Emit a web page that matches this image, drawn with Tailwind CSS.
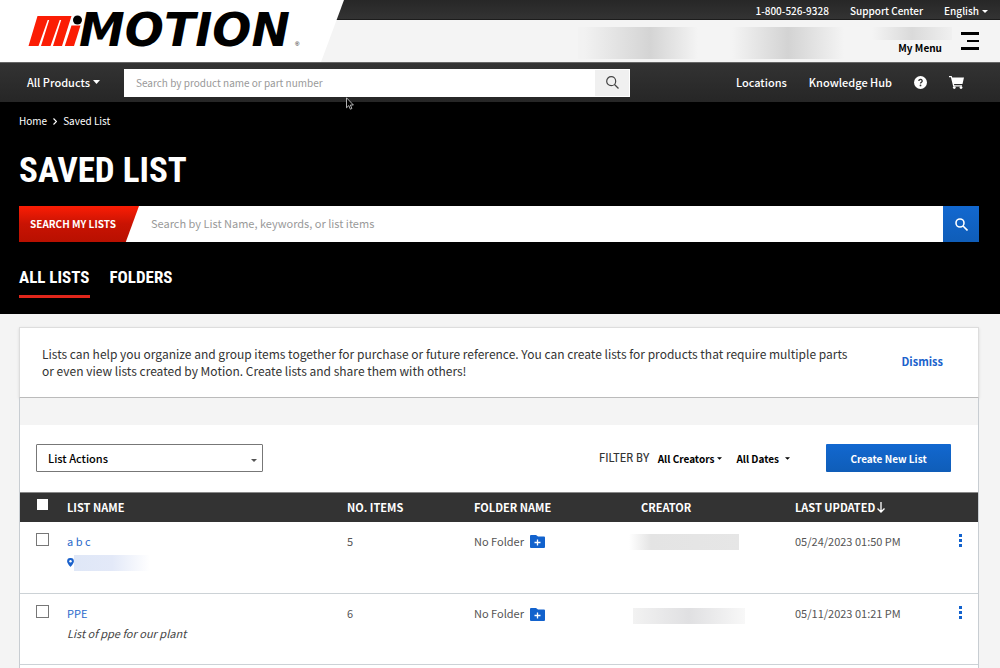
<!DOCTYPE html>
<html lang="en">
<head>
<meta charset="utf-8">
<meta name="viewport" content="width=device-width, initial-scale=1">
<title>Saved List</title>
<script src="https://cdn.jsdelivr.net/npm/@tailwindcss/browser@4"></script>
</head>
<body class="flex min-h-screen flex-col bg-[#f4f4f4] font-['Noto_Sans_CJK_SC','Noto_Sans',sans-serif] text-[11px] text-[#333]">

<header class="relative">
  <!-- Utility bar -->
  <div class="flex h-5 items-center justify-end gap-[21px] border-b border-[#1c1c1c] bg-linear-to-b from-[#272727] to-[#333] pr-3 pt-[3px] text-[10px] leading-4 font-medium text-white">
    <a href="tel:18005269328">1-800-526-9328</a>
    <a href="#">Support Center</a>
    <button type="button" class="flex items-center gap-[3px]">English
      <svg class="h-[3px] w-[6px]" viewBox="0 0 6 3"><path d="M0 0h6L3 3z" fill="currentColor"/></svg>
    </button>
  </div>

  <!-- Account strip -->
  <div class="flex h-[42px] items-start justify-end bg-[#f4f4f4]">
    <div class="mt-[7px] h-8 w-30 bg-linear-to-r from-[#f2f2f2] from-5% via-[#d4d4d4] via-60% to-[#f4f4f4]"></div>
    <div class="mt-[7px] ml-[34px] h-8 w-28 bg-linear-to-r from-[#f4f4f4] via-[#d3d3d3] to-[#f4f4f4]"></div>
    <div class="mt-[7px] ml-7 flex flex-col items-end">
      <div class="h-[13px] w-20 bg-linear-to-r from-[#f4f4f4] via-[#dadada] to-[#f0f0f0]"></div>
      <span class="pr-[10px] text-[10px] leading-4 font-bold text-black">My Menu</span>
    </div>
    <button type="button" aria-label="Open menu" class="mt-3 mr-[21px] ml-[9px]">
      <svg class="h-[18px] w-[18px]" viewBox="0 0 18 18"><path d="M0 0h18v3H0zM6 8h12v2H6zM0 15h18v3H0z"/></svg>
    </button>
  </div>

  <!-- Logo panel -->
  <a href="#" aria-label="Motion home" class="absolute top-0 left-0 block h-[62px] w-[345px]">
    <svg class="h-full w-full" viewBox="0 0 345 62">
      <path d="M0 0h344L321 62H0z" fill="#fff"/>
      <g fill="#fb1d04">
        <path d="M37.500 16H71.500L62 46H53L61.200 20h-1.500L50.500 46H41L49.200 20h-1.500L38.500 46H28.500z"/>
        <path d="M71.500 25.500h9L74 46H64.800z"/>
      </g>
      <circle cx="77.500" cy="20" r="4.500" fill="#000"/>
      <text x="79" y="46" font-family="DejaVu Sans" font-weight="700" font-style="italic" font-size="46">MOTION</text>
      <text x="295" y="46" font-family="Liberation Sans" font-size="6">®</text>
    </svg>
  </a>

  <!-- Main navigation -->
  <nav class="flex h-10 items-center border-t border-[#666] bg-linear-to-b from-[#333] to-[#262626] pr-9 pl-[27px] text-[11px] leading-4 font-medium text-white">
    <button type="button" class="flex w-[97px] items-center gap-[3px] pb-[2px]">All Products
      <svg class="h-[4px] w-[7px]" viewBox="0 0 7 4"><path d="M0 0h7L3.500 4z" fill="currentColor"/></svg>
    </button>
    <form class="flex h-7 w-[506px] border border-white bg-white">
      <input type="text" aria-label="Search products" placeholder="Search by product name or part number" class="min-w-0 flex-1 px-[11px] text-[10px] font-normal text-black outline-none placeholder:text-[#999]">
      <button type="submit" aria-label="Search" class="flex w-[34px] items-center justify-center bg-[#f0f0f0]">
        <svg class="size-[13px]" viewBox="0 0 13 13" fill="none" stroke="#444" stroke-width="1.200"><circle cx="5.200" cy="5.200" r="4.500"/><path d="M8.500 8.500l4 4"/></svg>
      </button>
    </form>
    <div class="ml-auto flex items-center gap-[22px]">
      <a href="#" class="pb-[2px]">Locations</a>
      <a href="#" class="pb-[2px]">Knowledge Hub</a>
      <a href="#" aria-label="Help"><svg class="size-[13px]" viewBox="0 0 13 13"><circle cx="6.500" cy="6.500" r="6.500" fill="#fff"/><path d="M4.800 5a1.700 1.500 0 1 1 2.500 1.300c-.6.300-.8.500-.8 1.200" fill="none" stroke="#333" stroke-width="1.300"/><circle cx="6.500" cy="9.400" r=".9" fill="#333"/></svg></a>
      <a href="#" aria-label="Cart"><svg class="h-[13px] w-[15px]" viewBox="0 0 15 13" fill="#fff"><path d="M0 0h2.700l.5 1.500H15L13.500 8H5l.3 1.200H13v1.200H4.200L1.900 1.300H0z"/><circle cx="5.300" cy="11.600" r="1.400"/><circle cx="12" cy="11.600" r="1.400"/></svg></a>
    </div>
  </nav>
</header>

<!-- Page banner -->
<section class="bg-black pt-[11px] pr-[21px] pl-[19px] text-white">
  <nav aria-label="Breadcrumb" class="flex items-center gap-[6px] text-[10px] leading-4">
    <a href="#">Home</a>
    <svg class="h-[7px] w-[4px]" viewBox="0 0 4 7" fill="none" stroke="#fff" stroke-width="1.200"><path d="M.5.5l3 3-3 3"/></svg>
    <span>Saved List</span>
  </nav>
  <h1 class="mt-[22px] h-10 font-['Roboto_Condensed','Liberation_Sans_Narrow',sans-serif] text-[35px] leading-10 font-bold whitespace-nowrap">SAVED LIST</h1>
  <form class="mt-[15px] flex h-9 bg-white">
    <label for="list-search" class="flex w-[120px] items-center bg-linear-to-b from-[#fb1d04] via-[#c91303] to-[#b81000] pb-px pl-[11px] text-[10px] font-bold whitespace-nowrap [clip-path:polygon(0_0,100%_0,89%_100%,0_100%)]">SEARCH MY LISTS</label>
    <input id="list-search" type="text" placeholder="Search by List Name, keywords, or list items" class="min-w-0 flex-1 px-3 pb-[2px] text-[11px] text-black outline-none placeholder:text-[#999]">
    <button type="submit" aria-label="Search lists" class="flex w-9 items-center justify-center bg-linear-to-b from-[#1268d0] to-[#0f5db8]">
      <svg class="size-[13px]" viewBox="0 0 13 13" fill="none" stroke="#fff" stroke-width="1.600"><circle cx="5" cy="5" r="4"/><path d="M8 8l4.500 4.500"/></svg>
    </button>
  </form>
  <div class="mt-[22px] flex h-[50px] items-start gap-[20px] font-['Roboto_Condensed','Liberation_Sans_Narrow',sans-serif] text-[17px] leading-[26px] font-bold whitespace-nowrap">
    <button type="button" class="border-b-3 border-[#e0261b] pb-[5px]">ALL LISTS</button>
    <button type="button">FOLDERS</button>
  </div>
</section>

<main class="flex flex-1 flex-col pt-[13px] pr-[21px] pl-[19px]">
  <section class="flex h-[71px] items-center border border-[#ddd] border-b-[#bbb] bg-white px-[22px] pb-[2px] shadow-sm">
    <p class="min-w-0 flex-1 text-xs leading-[17px]">Lists can help you organize and group items together for purchase or future reference. You can create lists for products that require multiple parts<br> or even view lists created by Motion. Create lists and share them with others!</p>
    <button type="button" class="mr-[13px] ml-6 text-[11px] font-bold text-[#1b62cc]">Dismiss</button>
  </section>

  <section class="flex flex-1 flex-col border-x border-[#c8cdd2] bg-white">
    <div class="h-[27px] bg-[#f4f4f4]"></div>
    <div class="flex h-[67px] items-center pr-[27px] pb-px pl-4 font-bold text-black">
      <div class="relative">
        <select aria-label="List actions" class="h-7 w-[227px] appearance-none rounded-[1px] border border-[#777] bg-white px-[11px] text-[11px] font-medium">
          <option>List Actions</option>
        </select>
        <svg class="pointer-events-none absolute top-[15px] right-[6px] h-[3px] w-[6px]" viewBox="0 0 6 3"><path d="M0 0h6L3 3z" fill="#555"/></svg>
      </div>
      <span class="ml-auto font-['Roboto_Condensed','Liberation_Sans_Narrow',sans-serif] text-[13px] font-normal text-[#333]">FILTER BY</span>
      <button type="button" class="ml-2 flex items-center gap-[3px] text-[10px]">All Creators
        <svg class="h-[3px] w-[5px]" viewBox="0 0 6 3"><path d="M0 0h6L3 3z"/></svg></button>
      <button type="button" class="ml-[14px] flex items-center gap-[6px] text-[10px]">All Dates
        <svg class="h-[3px] w-[5px]" viewBox="0 0 6 3"><path d="M0 0h6L3 3z"/></svg></button>
      <button type="button" class="ml-9 h-7 w-[125px] rounded-[1px] bg-linear-to-b from-[#1268d0] to-[#0f5db8] text-[10px] text-white">Create New List</button>
    </div>

    <table class="w-full table-fixed border-collapse text-left text-[11px] leading-4 text-[#555]">
      <colgroup><col class="w-[47px]"><col><col class="w-[127px]"><col class="w-[167px]"><col class="w-[154px]"><col class="w-[154px]"><col class="w-[29px]"></colgroup>
      <thead class="bg-[#333] font-bold text-white">
        <tr class="h-[29px] border-t border-[#888]">
          <th class="pl-[17px] align-top"><input type="checkbox" aria-label="Select all lists" class="mt-[6px] block size-[11px] appearance-none bg-white"></th>
          <th scope="col">LIST NAME</th><th scope="col">NO. ITEMS</th><th scope="col">FOLDER NAME</th><th scope="col">CREATOR</th>
          <th scope="col"><button type="button" class="flex items-center gap-[2px]">LAST UPDATED
            <svg class="h-[11px] w-[8px]" viewBox="0 0 8 11" fill="none" stroke="#fff" stroke-width="1.300"><path d="M4 0v10M.5 6.500L4 10l3.500-3.500"/></svg></button></th>
          <th></th>
        </tr>
      </thead>
      <tbody>
        <tr class="h-[72px] border-b border-[#ccd2d6] align-top">
          <td class="pt-[11px] pl-4"><input type="checkbox" aria-label="Select a b c" class="block size-[13px] appearance-none border border-[#777] bg-white"></td>
          <td class="pt-[11px]"><a href="#" class="text-[#2a6acb]">a b c</a>
            <div class="mt-[6px] flex items-center">
              <svg class="h-[9px] w-[7px]" viewBox="0 0 7 9"><path d="M3.500 0A3.300 3.300 0 0 1 6.900 3.300C6.900 5.500 3.500 9 3.500 9S.1 5.500.1 3.300A3.300 3.300 0 0 1 3.500 0z" fill="#1b62cc"/><circle cx="3.500" cy="3.200" r="1.200" fill="#fff"/></svg>
              <div class="h-4 w-[76px] bg-linear-to-r from-[#dfe7f7] via-[#e3e9f8] to-white"></div>
            </div></td>
          <td class="pt-[11px]">5</td>
          <td class="pt-[11px]"><div class="flex items-center gap-[6px]">No Folder
            <button type="button" aria-label="Add a b c to a folder" class="pt-[2px]"><svg class="h-[13px] w-[15px]" viewBox="0 0 15 13"><path d="M1 0h5l2 1.500h6a1 1 0 0 1 1 1V12a1 1 0 0 1-1 1H1a1 1 0 0 1-1-1V1a1 1 0 0 1 1-1z" fill="#1262cd"/><path d="M7.500 4.500v6M4.500 7.500h6" stroke="#fff" stroke-width="1.300"/></svg></button></div></td>
          <td class="pt-3"><div class="-ml-3 h-4 w-[110px] bg-linear-to-r from-white via-[#e4e4e4] via-20% to-[#e6e6e6]"></div></td>
          <td class="pt-[11px]">05/24/2023 01:50 PM</td>
          <td class="pt-3"><button type="button" aria-label="Actions for a b c" class="ml-[10px] block"><svg class="h-[13px] w-[3px]" viewBox="0 0 3 13" fill="#1262cd"><path d="M0 0h3v3H0zM0 5h3v3H0zM0 10h3v3H0z"/></svg></button></td>
        </tr>
        <tr class="h-[71px] border-b border-[#ccd2d6] align-top">
          <td class="pt-[11px] pl-4"><input type="checkbox" aria-label="Select PPE" class="block size-[13px] appearance-none border border-[#777] bg-white"></td>
          <td class="pt-[11px]"><a href="#" class="text-[#2a6acb]">PPE</a><p class="mt-1 text-[#444] italic">List of ppe for our plant</p></td>
          <td class="pt-[11px]">6</td>
          <td class="pt-[11px]"><div class="flex items-center gap-[6px]">No Folder
            <button type="button" aria-label="Add PPE to a folder" class="pt-[2px]"><svg class="h-[13px] w-[15px]" viewBox="0 0 15 13"><path d="M1 0h5l2 1.500h6a1 1 0 0 1 1 1V12a1 1 0 0 1-1 1H1a1 1 0 0 1-1-1V1a1 1 0 0 1 1-1z" fill="#1262cd"/><path d="M7.500 4.500v6M4.500 7.500h6" stroke="#fff" stroke-width="1.300"/></svg></button></div></td>
          <td class="pt-[14px]"><div class="-ml-2 h-4 w-28 bg-linear-to-r from-[#f2f2f2] via-[#e0e0e2] to-[#f8f8f8]"></div></td>
          <td class="pt-[11px]">05/11/2023 01:21 PM</td>
          <td class="pt-3"><button type="button" aria-label="Actions for PPE" class="ml-[10px] block"><svg class="h-[13px] w-[3px]" viewBox="0 0 3 13" fill="#1262cd"><path d="M0 0h3v3H0zM0 5h3v3H0zM0 10h3v3H0z"/></svg></button></td>
        </tr>
      </tbody>
    </table>
  </section>
</main>

<!-- Mouse pointer -->
<svg class="pointer-events-none absolute top-[97px] left-[346px] h-[13px] w-[8px]" viewBox="0 0 8 13"><path d="M.5.800v10l2.300-2.200 1.500 3.600 1.600-.7-1.500-3.500h3z" fill="#000" stroke="#ddd" stroke-width=".8"/></svg>
</body>
</html>
